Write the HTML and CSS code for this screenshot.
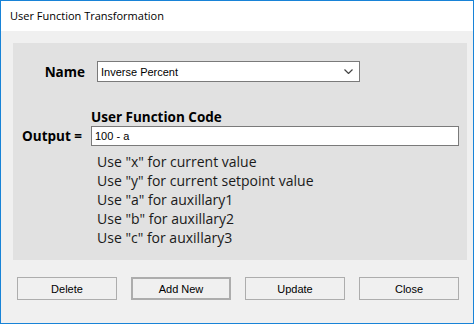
FILE: index.html
```html
<!DOCTYPE html>
<html lang="en">
  <head>
    <meta charset="UTF-8" />
    <title>User Function Transformation</title>
    <link rel="stylesheet" href="styles.css">
  </head>
  <body>
    <!-- ======= dialog window ======= -->
    <div class="window">
      <div class="titlebar">User Function Transformation</div>

      <div class="client">
        <div class="panel">
          <div class="row name-row">
            <label class="lbl name-lbl" for="fnName">Name</label>
            <div class="combo" id="fnName">
              <span>Inverse Percent</span>
              <svg class="chev" width="9" height="5" viewBox="0 0 9 5">
                <path d="M0.5 0.5 L4.5 4.5 L8.5 0.5" fill="none" stroke="#444" stroke-width="1.2" />
              </svg>
            </div>
          </div>

          <div class="code-head">User Function Code</div>
          <div class="row output-row">
            <label class="lbl output-lbl" for="fnCode">Output =</label>
            <input type="text" id="fnCode" class="textbox" value="100 - a" />
          </div>

          <ul class="help">
            <li>Use "x" for current value</li>
            <li>Use "y" for current setpoint value</li>
            <li>Use "a" for auxillary1</li>
            <li>Use "b" for auxillary2</li>
            <li>Use "c" for auxillary3</li>
          </ul>
        </div>

        <div class="buttons">
          <button>Delete</button>
          <button class="default">Add New</button>
          <button>Update</button>
          <button>Close</button>
        </div>
      </div>
    </div>
  </body>
</html>
```

FILE: styles.css
```css
* {
  margin: 0;
  padding: 0;
  box-sizing: border-box;
}

body {
  background: #fff;
  font-family: "Open Sans", "Noto Sans", sans-serif;
}

.window {
  width: 474px;
  height: 324px;
  border: 1px solid #1883d7;
  background: #f0f0f0;
}

.titlebar {
  height: 30px;
  background: #fff;
  color: #000;
  font-size: 11px;
  line-height: 30px;
  padding-left: 9px;
}

.client {
  padding: 12px 6px 0 12px;
}

.panel {
  background: #e1e1e1;
  height: 217px;
  padding-top: 18px;
}

.row {
  display: flex;
  align-items: center;
}

.lbl {
  font-weight: bold;
  font-size: 13.5px;
  color: #000;
  text-align: right;
}

.name-lbl {
  width: 72px;
  margin-right: 12px;
}

.combo {
  width: 263px;
  height: 21px;
  background: #fff;
  border: 1px solid #7a7a7a;
  display: flex;
  align-items: center;
  justify-content: space-between;
  padding: 0 6px 0 3px;
  font-family: "Liberation Sans", Arial, sans-serif;
  font-size: 11px;
}

.chev {
  display: block;
}

.code-head {
  margin-top: 26px;
  margin-left: 78px;
  font-weight: bold;
  font-size: 13.5px;
  line-height: 18px;
}

.output-lbl {
  width: 69px;
  margin-right: 9px;
}

.textbox {
  width: 368px;
  height: 20px;
  border: 1px solid #7a7a7a;
  background: #fff;
  padding: 0 3px;
  font-family: "Liberation Sans", Arial, sans-serif;
  font-size: 11px;
  outline: none;
}

.help {
  list-style: none;
  margin-left: 84px;
  margin-top: 6px;
  font-size: 14px;
  line-height: 19px;
  color: #1a1a1a;
}

.buttons {
  display: flex;
  gap: 14px;
  margin-top: 17px;
  padding-left: 4px;
}

.buttons button {
  width: 100px;
  height: 23px;
  background: #f0f0f0;
  border: 1px solid #adadad;
  font-family: "Liberation Sans", Arial, sans-serif;
  font-size: 11px;
  color: #000;
}

.buttons button.default {
  border: 2px solid #adadad;
}
```
